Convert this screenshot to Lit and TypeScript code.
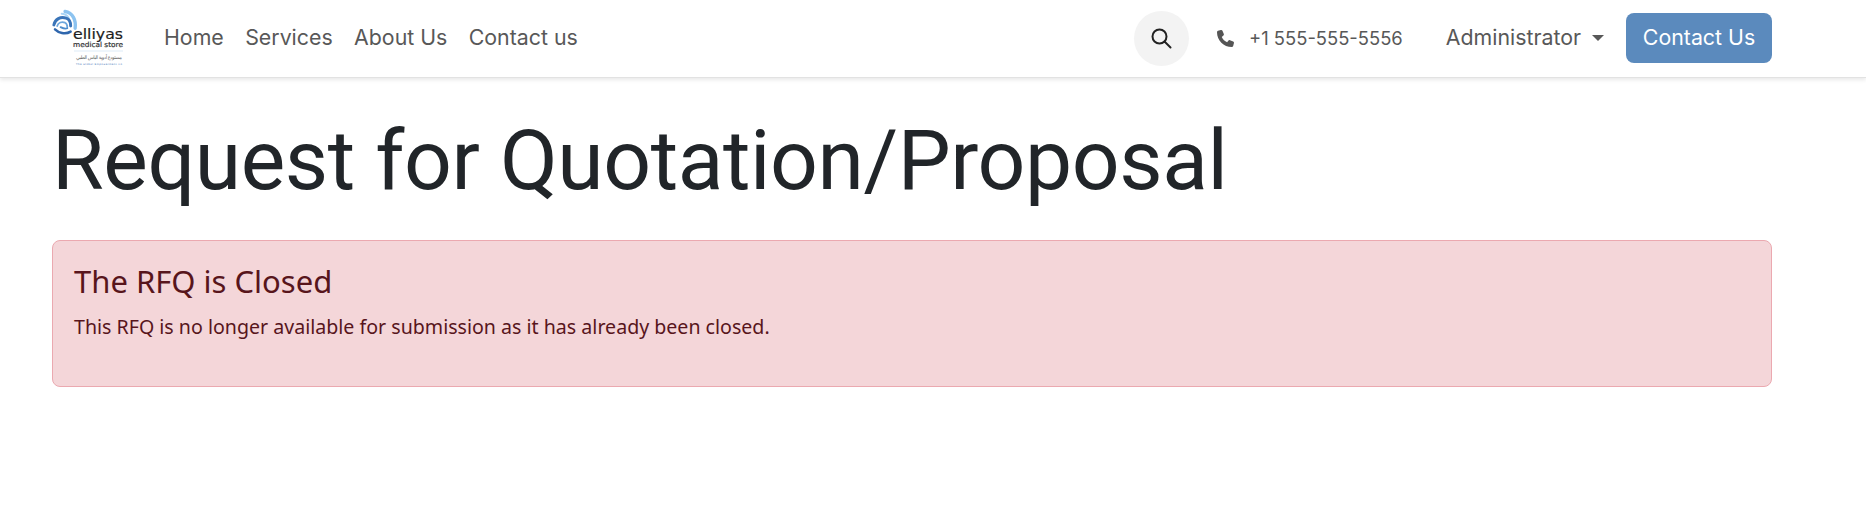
import { LitElement, html, css } from "lit";
import { customElement } from "lit/decorators.js";

@customElement("app-root")
export class AppRoot extends LitElement {
  static styles = css`
    :host { display: block; min-height: 524px; background: #fff; font-family: Inter, "Liberation Sans", sans-serif; }
    .nav { height: 78px; box-sizing: border-box; display: flex; align-items: center; padding: 0 94px 1px 52px; border-bottom: 1px solid #e2e2e2; box-shadow: 0 2px 4px rgba(0,0,0,.09); }
    .logo { width: 72px; height: 60px; margin-right: 40px; flex: none; display: block; }
    .logo text { font-family: "DejaVu Sans", sans-serif; }
    .links { display: flex; gap: 21.4px; font-size: 21.33px; color: #585858; line-height: 1; }
    .spacer { flex: 1; }
    .search { width: 55px; height: 55px; border-radius: 50%; background: #f3f3f3; display: flex; align-items: center; justify-content: center; margin-right: 28px; }
    .phone { display: flex; align-items: center; font-size: 18.4px; color: #585858; margin-right: 43px; line-height: 1; }
    .phone svg { margin-right: 15.5px; }
    .admin { display: flex; align-items: center; font-size: 21.33px; color: #585858; margin-right: 22px; line-height: 1; }
    .caret { width: 0; height: 0; border-top: 6px solid #585858; border-left: 6px solid transparent; border-right: 6px solid transparent; margin-left: 11px; }
    .btn { width: 146px; height: 50px; border-radius: 8px; background: #5b8abd; color: #fff; font-size: 21.33px; line-height: 1; display: flex; align-items: center; justify-content: center; padding-bottom: 1px; box-sizing: border-box; }
    main { padding: 0 94px 0 52px; }
    h1 { margin: 33px 0 0 0; font-family: Roboto, sans-serif; font-weight: 400; font-size: 84px; letter-spacing: -0.42px; line-height: 1.2; color: #212529; white-space: nowrap; }
    .alert { margin-top: 28px; height: 147px; box-sizing: border-box; padding: 22px 21px; background: #f4d6d9; border: 1px solid #eba9b0; border-radius: 8px; color: #58151c; font-family: "Noto Sans", sans-serif; }
    h2 { margin: 0; font-weight: 400; font-size: 31px; line-height: 1.2; }
    p { margin: 13px 0 0; font-size: 19.6px; line-height: 1.4; }
  `;
  render() {
    return html`
      <div class="nav">
        <svg class="logo" viewBox="0 0 72 60">
          <g fill="none" stroke-linecap="round" transform="translate(-1.5 -1) scale(1.12)">
            <path d="M13 4c7 1 10 8 9 15" stroke="#8cc3f0" stroke-width="3"/>
            <path d="M10 6c5 0 8 5 8 11" stroke="#a9d4f5" stroke-width="1.8"/>
            <path d="M3 16c1-5 6-8 11-6 3 1 4 4 4 7" stroke="#3a74b8" stroke-width="2.6"/>
            <path d="M6 17c1-3 4-4 7-3 2 1 2 2 2 4" stroke="#6ca6dc" stroke-width="1.6"/>
            <path d="M4 20c3 3 9 5 14 2" stroke="#2f66ad" stroke-width="2.2"/>
            <path d="M9 18c2 1 4 2 6 1" stroke="#4d8ccb" stroke-width="1.6"/>
          </g>
          <text x="21" y="31" font-size="14" fill="#1d1d1d" stroke="#1d1d1d" stroke-width=".2" textLength="50" lengthAdjust="spacingAndGlyphs">elliyas</text>
          <text x="21" y="39" font-size="7" fill="#333" stroke="#333" stroke-width=".2" textLength="50" lengthAdjust="spacingAndGlyphs">medical store</text>
          <line x1="22" y1="43" x2="71" y2="43" stroke="#cfe2f3" stroke-width=".7"/>
          <text x="24" y="51" font-size="5" fill="#666" font-family="Noto Sans" textLength="46">مستودع أدوية الياس الطبي</text>
          <text x="24" y="56.5" font-size="2.5" fill="#3d74b5" textLength="46">The Global Empowerment Co</text>
        </svg>
        <div class="links"><span>Home</span><span>Services</span><span>About Us</span><span>Contact us</span></div>
        <div class="spacer"></div>
        <div class="search">
          <svg width="22" height="22" viewBox="0 0 22 22" fill="none" stroke="#222" stroke-width="2"><circle cx="9.5" cy="9.5" r="7"/><path d="M14.5 14.5L20.5 20.5" stroke-linecap="round"/></svg>
        </div>
        <div class="phone">
          <svg width="17" height="17" viewBox="0 0 512 512" fill="#555"><path d="M164.9 24.6c-7.7-18.6-28-28.5-47.4-23.2l-88 24C12.1 30.2 0 46 0 64c0 247.4 200.6 448 448 448 18 0 33.8-12.1 38.6-29.5l24-88c5.3-19.4-4.6-39.7-23.2-47.4l-96-40c-16.3-6.8-35.2-2.1-46.3 11.6L304.7 368C234.3 334.7 177.3 277.7 144 207.3l49.3-40.3c13.7-11.2 18.4-30 11.6-46.3l-40-96z"/></svg>
          <span>+1 555-555-5556</span>
        </div>
        <div class="admin"><span>Administrator</span><span class="caret"></span></div>
        <div class="btn">Contact Us</div>
      </div>
      <main>
        <h1>Request for Quotation/Proposal</h1>
        <div class="alert">
          <h2>The RFQ is Closed</h2>
          <p>This RFQ is no longer available for submission as it has already been closed.</p>
        </div>
      </main>
    `;
  }
}
